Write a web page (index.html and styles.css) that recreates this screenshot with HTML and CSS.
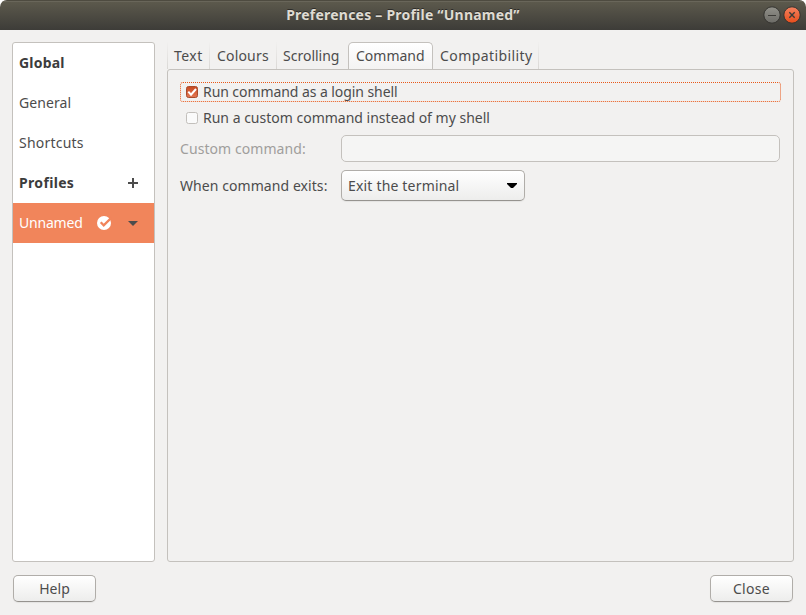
FILE: index.html
```html
<!DOCTYPE html>
<html lang="en-GB">
<head>
<meta charset="utf-8">
<title>Preferences – Profile “Unnamed”</title>
<link rel="stylesheet" href="styles.css">
</head>
<body>
<div class="window">
  <header class="titlebar">
    <h1 class="title">Preferences – Profile “Unnamed”</h1>
    <div class="controls">
      <svg width="18" height="18" viewBox="0 0 18 18"><defs><linearGradient id="grey" x2="0" y2="1"><stop stop-color="#92918a"/><stop offset="1" stop-color="#6c6b66"/></linearGradient></defs><circle cx="9" cy="9" r="8.2" fill="url(#grey)" stroke="#353430"/><path d="M5 9.5h8" stroke="#3c3b37"/></svg>
      <svg width="18" height="18" viewBox="0 0 18 18"><defs><linearGradient id="orange" x2="0" y2="1"><stop stop-color="#f58260"/><stop offset="1" stop-color="#e64d1b"/></linearGradient></defs><circle cx="9" cy="9" r="8.2" fill="url(#orange)" stroke="#353430"/><path d="M6.3 6.3l5.4 5.4m0-5.4l-5.4 5.4" stroke="#3c3b37" stroke-width="1.4"/></svg>
    </div>
  </header>
  <main class="content">
    <nav class="sidebar">
      <div class="row heading"><span class="t-global">Global</span></div>
      <div class="row"><span class="t-general">General</span></div>
      <div class="row"><span class="t-shortcuts">Shortcuts</span></div>
      <div class="row heading"><span class="t-profiles">Profiles</span>
        <svg class="end" width="16" height="16" viewBox="0 0 16 16"><path d="M8 3v10M3 8h10" stroke="#4c4c4c" stroke-width="2"/></svg></div>
      <div class="row selected"><span class="t-unnamed">Unnamed</span>
        <svg class="default" width="16" height="16" viewBox="0 0 16 16"><circle cx="8" cy="8" r="7" fill="#fff"/><path d="M4.7 7.3l3 3L15.5 2.5" fill="none" stroke="#f1855b" stroke-width="2.3"/></svg>
        <svg class="end" width="16" height="16" viewBox="0 0 16 16"><path d="M3 6h10l-5 5z" fill="#4c4c4c"/></svg></div>
    </nav>
    <section class="notebook">
      <div class="tabs">
        <div class="tab"><span class="t-text">Text</span></div>
        <div class="tab"><span class="t-colours">Colours</span></div>
        <div class="tab"><span>Scrolling</span></div>
        <div class="tab active"><span>Command</span></div>
        <div class="tab"><span class="t-compat">Compatibility</span></div>
      </div>
      <div class="panel">
        <div class="check focused"><svg width="14" height="14" viewBox="0 0 14 14"><defs><linearGradient id="box" x2="0" y2="1"><stop stop-color="#c8481f"/><stop offset="1" stop-color="#e27853"/></linearGradient></defs><rect x="1.5" y="1.5" width="11" height="11" rx="2" fill="url(#box)" stroke="#a94b2c"/><path d="M3.3 6.7l2.7 3 5-5.7" fill="none" stroke="#fff" stroke-width="2"/></svg><span class="t-login">Run command as a login shell</span></div>
        <div class="check"><svg width="14" height="14" viewBox="0 0 14 14"><rect x="1.5" y="1.5" width="11" height="11" rx="2" fill="#fafafa" stroke="#c2bfbb"/></svg><span>Run a custom command instead of my shell</span></div>
        <div class="field"><span class="disabled t-ccmd">Custom command:</span><div class="entry"></div></div>
        <div class="field exits"><span class="t-ccmd">When command exits:</span>
          <div class="combo"><span class="t-exit">Exit the terminal</span><svg width="12" height="8" viewBox="0 0 12 8"><path d="M1 1h10v1L7 6H5L1 2z" fill="#000"/></svg></div></div>
      </div>
    </section>
  </main>
  <footer class="actions">
    <div class="button"><span>Help</span></div>
    <div class="button"><span class="t-close">Close</span></div>
  </footer>
</div>
</body>
</html>
```
FILE: styles.css
```css
* { box-sizing: border-box; }
body { margin: 0; background: #fff; font: 14px/20px "Noto Sans", sans-serif; color: #4c4c4c; }
svg { display: block; flex: none; }
span { white-space: nowrap; }
.window { height: 615px; display: flex; flex-direction: column; background: #f2f1f0; border-radius: 7px 7px 0 0; overflow: hidden; }
.titlebar { height: 30px; flex: none; display: grid; grid-template-columns: 1fr auto 1fr; align-items: center; background: linear-gradient(#5d5a4d, #3d3c38); border-top: 1px solid #4e4b40; box-shadow: inset 0 1px #69665a; }
.title { grid-column: 2; margin: 0; padding-bottom: 2px; font-size: 14px; line-height: 20px; font-weight: 700; letter-spacing: .22px; color: #dfdbd2; text-shadow: 0 -1px #2d2c29; white-space: nowrap; }
.controls { display: flex; gap: 2px; justify-content: flex-end; padding: 0 5px 1px 0; }
.content { display: flex; gap: 12px; height: 532px; flex: none; padding: 12px 12px 0; }
.sidebar { width: 143px; flex: none; background: #fff; border: 1px solid #c4c1bd; border-radius: 3px; }
.row { height: 40px; display: flex; align-items: center; padding: 0 13px 0 6px; }
.heading { font-weight: 700; color: #3c3c3c; }
.end { margin-left: auto; }
.selected { background: #f1855b; color: #fff; }
.default { margin-left: auto; }
.selected .end { margin-left: 13px; }
.notebook { flex: none; width: 627px; display: flex; flex-direction: column; }
.tabs { height: 27px; display: grid; grid-template-columns: 43px 67px 71px 85px 106px; }
.tab { padding: 4px 0 0 7px; border-right: 1px solid; border-image: linear-gradient(#f2f1f0, #d9d7d4) 1; }
.tab:first-child { border-left: 1px solid; padding-left: 6px; }
.tab:nth-child(3) { border-right: 0; padding-left: 6px; }
.active { border: 1px solid #c4c1bd; border-image: none; border-bottom: 0; border-radius: 5px 5px 0 0; background: linear-gradient(#fff, #f4f3f2); padding-top: 3px; }
.panel { flex: 1; border: 1px solid #c4c1bd; border-radius: 3px; padding: 12px; }
.check { height: 20px; display: flex; align-items: center; gap: 4px; padding-left: 5px; margin-bottom: 6px; }
.focused { border: 1px dotted #ea5818; border-radius: 3px; padding-left: 4px; }
.field { display: grid; grid-template-columns: 161px 439px; align-items: center; margin-top: 7px; }
.disabled { color: #a09e9c; }
.entry { height: 27px; border: 1px solid #c4c1bd; border-radius: 5px; background: #f5f5f4; }
.exits { margin-top: 8px; }
.combo { width: 184px; height: 31px; display: flex; justify-content: space-between; align-items: center; padding: 0 6px; }
.combo, .button { border: 1px solid #b0ada9; border-bottom-color: #96938f; border-radius: 5px; background: linear-gradient(#fff, #ededec); box-shadow: 0 1px 1px #e4e3e1; }
.actions { display: flex; justify-content: space-between; padding: 13px 13px 0; }
.button { width: 83px; height: 27px; display: flex; align-items: center; justify-content: center; }
.t-global { letter-spacing: .2px; }
.t-general { letter-spacing: .08px; }
.t-shortcuts { letter-spacing: .22px; }
.t-profiles { letter-spacing: .33px; }
.t-unnamed { letter-spacing: -.2px; }
.t-text { letter-spacing: .45px; }
.t-colours { letter-spacing: .18px; }
.t-compat { letter-spacing: .42px; }
.t-login { letter-spacing: -.07px; }
.t-ccmd { letter-spacing: .07px; }
.t-exit { letter-spacing: .18px; }
.t-close { letter-spacing: .3px; }
```
